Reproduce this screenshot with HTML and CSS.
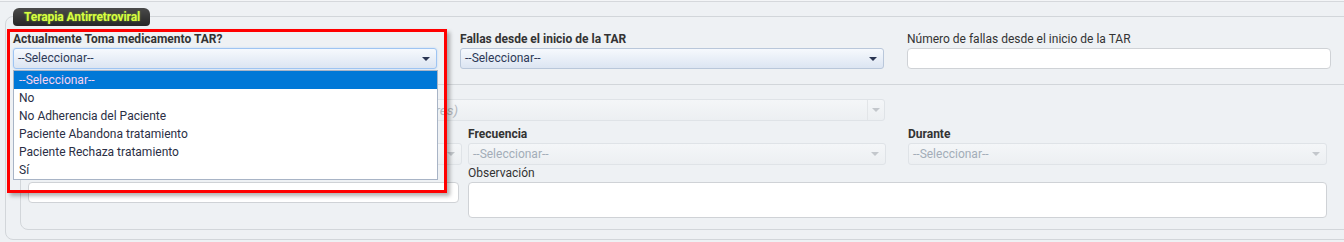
FILE: index.html
```html
<!DOCTYPE html>
<html lang="es">
<head>
    <meta charset="UTF-8">
    <meta name="viewport" content="width=device-width, initial-scale=1.0">
    <title>Terapia Antirretroviral</title>
    <link rel="stylesheet" href="styles.css">
</head>
<body>

    <!-- Fin de la seccion anterior -->
    <div class="prev-section"></div>

    <!-- Terapia Antirretroviral -->
    <div class="panel">
        <div class="panel-legend">Terapia Antirretroviral</div>

        <div class="field-row">
            <div class="field field-open">
                <label class="field-label strong">Actualmente Toma medicamento TAR?</label>
                <div class="select select-focus">--Seleccionar--<span class="caret"></span></div>
                <ul class="select-list">
                    <li class="selected">--Seleccionar--</li>
                    <li>No</li>
                    <li>No Adherencia del Paciente</li>
                    <li>Paciente Abandona tratamiento</li>
                    <li>Paciente Rechaza tratamiento</li>
                    <li>Sí</li>
                </ul>
            </div>
            <div class="field">
                <label class="field-label strong">Fallas desde el inicio de la TAR</label>
                <div class="select">--Seleccionar--<span class="caret"></span></div>
            </div>
            <div class="field">
                <label class="field-label">Número de fallas desde el inicio de la TAR</label>
                <div class="text-input"></div>
            </div>
        </div>

        <!-- Campos bajo la lista abierta: sus textos quedan tapados -->
        <div class="subpanel">
            <div class="sub-field full-row">
                <label class="field-label strong short"></label>
                <div class="select select-disabled select-multi"><span class="placeholder">(Seleccione los medicamentos del esquema actual, uno o varios valores)</span><span class="caret-box"><span class="caret"></span></span></div>
            </div>

            <div class="sub-field">
                <label class="field-label strong"></label>
                <div class="select select-disabled w-col1"><span class="caret"></span></div>
            </div>
            <div class="sub-field">
                <label class="field-label strong">Frecuencia</label>
                <div class="select select-disabled w-col2">--Seleccionar--<span class="caret"></span></div>
            </div>
            <div class="sub-field">
                <label class="field-label strong">Durante</label>
                <div class="select select-disabled w-col3">--Seleccionar--<span class="caret"></span></div>
            </div>

            <div class="sub-field">
                <label class="field-label"></label>
                <div class="text-input w-col1-input"></div>
            </div>
            <div class="sub-field span-2">
                <label class="field-label">Observación</label>
                <div class="text-area"></div>
            </div>
        </div>
    </div>

    <!-- Marca de revision -->
    <div class="highlight-box"></div>

</body>
</html>
```

FILE: styles.css
```css
/* Formulario de terapia antirretroviral */
body {
    margin: 0;
    font-family: Roboto, "Liberation Sans", Arial, sans-serif;
    font-size: 12px;
    color: #333;
    background: #eef1f4;
    overflow: hidden;
    position: relative;
    height: 242px;
}

.prev-section {
    height: 1px;
    background: #f3f5f7;
    border-bottom: 1px solid #d5d8dc;
}

.panel {
    margin: 14px 0 0 5px;
    width: 1400px;
    border: 1px solid #d2d6da;
    border-radius: 8px;
    padding: 0 0 9px 7px;
}

.panel-legend {
    width: fit-content;
    margin-top: -9px;
    height: 18px;
    line-height: 18px;
    padding: 0 10px 0 11px;
    border-radius: 6px 6px 4px 4px;
    background: linear-gradient(#4a4a4a, #262626);
    color: #d6ff3f;
    font-weight: bold;
    font-size: 12px;
    letter-spacing: -0.1px;
    text-shadow: 0 0 2px rgba(200, 255, 60, 0.5);
}

.field-row {
    display: grid;
    grid-template-columns: 424px 424px 424px;
    column-gap: 23px;
    margin-top: 5px;
}

.field {
    position: relative;
}

.field-label {
    display: block;
    height: 16px;
    line-height: 16px;
    margin-bottom: 1px;
    white-space: nowrap;
}

.field-label.strong {
    font-weight: bold;
}

.select {
    position: relative;
    box-sizing: border-box;
    height: 21px;
    line-height: 19px;
    padding: 0 20px 0 4px;
    border: 1px solid #b9c7da;
    border-radius: 3px;
    background: linear-gradient(#f6f9fd, #dce5f2);
    color: #2c3957;
    font-size: 12px;
    white-space: nowrap;
    overflow: hidden;
}

.select-focus {
    border-color: #9ec4f2;
    box-shadow: 0 0 2px #b6d4f7;
}

.caret {
    position: absolute;
    right: 6px;
    top: 8px;
    width: 0;
    height: 0;
    border-left: 4px solid transparent;
    border-right: 4px solid transparent;
    border-top: 4px solid #2a3552;
}

.select-list {
    position: absolute;
    left: 0;
    top: 100%;
    width: 425px;
    margin: 1px 0 0;
    padding: 0;
    list-style: none;
    box-sizing: border-box;
    border: 1px solid #a8b4c6;
    background: #fff;
    color: #2b2f45;
    font-size: 12px;
    z-index: 5;
}

.select-list li {
    height: 18px;
    line-height: 18px;
    padding-left: 5px;
}

.select-list li.selected {
    background: #0078d7;
    color: #f7d3f0;
}

.text-input {
    box-sizing: border-box;
    height: 21px;
    border: 1px solid #cfd2d6;
    border-radius: 4px;
    background: #fff;
}

.subpanel {
    display: grid;
    grid-template-columns: 440px 440px 440px;
    align-content: start;
    margin: 15px 0 0 7px;
    padding: 0 0 10px 7px;
    border: 1px solid #d2d6da;
    border-radius: 8px;
    height: 134px;
}

.sub-field.full-row {
    grid-column: 1 / -1;
}

.sub-field.span-2 {
    grid-column: span 2;
}

.sub-field .field-label.short {
    height: 14px;
    line-height: 14px;
    margin-bottom: 0;
}

.select-disabled {
    height: 22px;
    line-height: 20px;
    border-color: #dfe3e7;
    background: linear-gradient(#f4f6f8, #eceff2);
    color: #a3adb8;
}

.select-disabled .caret {
    border-top-color: #c3c7cc;
}

.select-multi {
    width: 857px;
    padding-left: 6px;
    margin-bottom: 5px;
}

.placeholder {
    font-style: italic;
    color: #b3b8be;
    font-size: 13.5px;
}

.caret-box {
    position: absolute;
    right: 0;
    top: 0;
    bottom: 0;
    width: 16px;
    border-left: 1px solid #e2e5e8;
}

.caret-box .caret {
    right: 4px;
}

.w-col1 { width: 434px; }
.w-col2 { width: 418px; }
.w-col3 { width: 419px; }
.w-col1-input { width: 431px; }

.text-area {
    box-sizing: border-box;
    width: 859px;
    height: 36px;
    border: 1px solid #cfd2d6;
    border-radius: 4px;
    background: #fff;
}

.highlight-box {
    position: absolute;
    left: 7px;
    top: 29px;
    width: 440px;
    height: 164px;
    box-sizing: border-box;
    border: 3px solid #f00;
    box-shadow: 3px 3px 4px rgba(0, 0, 0, 0.3);
    z-index: 10;
}
```
